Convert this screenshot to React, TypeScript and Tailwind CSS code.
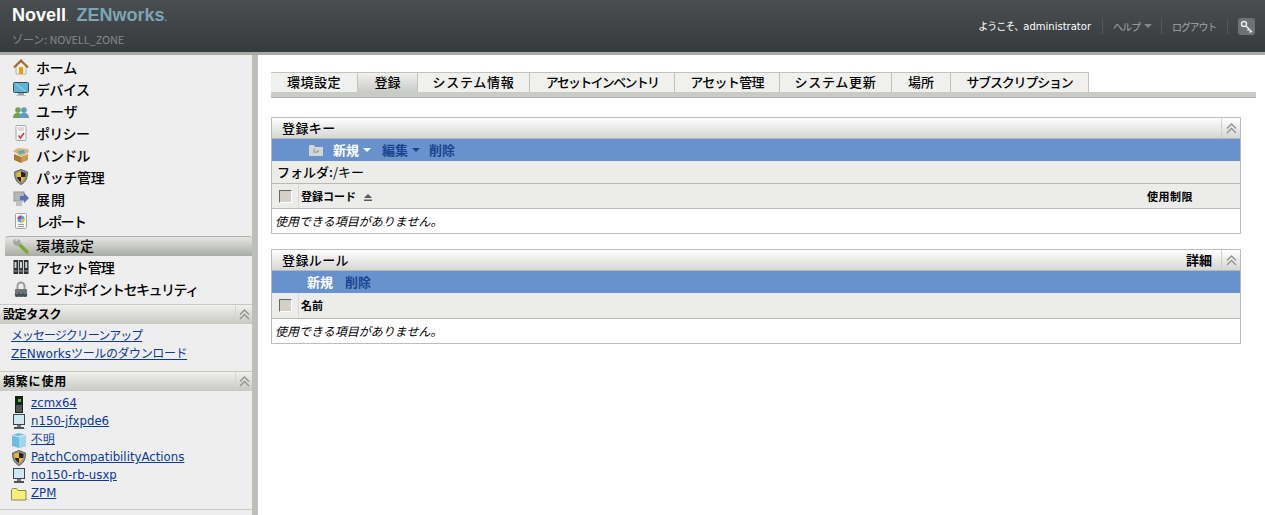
import type { ReactNode } from "react"

const font = "[font-family:'Noto_Sans_CJK_JP','Liberation_Sans',sans-serif]"
const latin = "font-['DejaVu_Sans',sans-serif]"

const HomeIcon = () => (
  <svg width="16" height="16" viewBox="0 0 16 16">
    <path d="M3 8v7h10V8L8 3z" fill="#f3f1e8" stroke="#b9b4a4" />
    <path d="M1 8.500 8 1.500l7 7" fill="none" stroke="#a5672c" strokeWidth="2" />
    <rect x="6" y="8" width="4" height="7" fill="#f09a10" />
  </svg>
)
const DeviceIcon = () => (
  <svg width="16" height="16" viewBox="0 0 16 16">
    <rect x="0.500" y="1.500" width="15" height="10" rx="1" fill="#5fb4d3" stroke="#3d4b50" />
    <path d="M3 3l9 7" stroke="#a5dcec" />
    <rect x="5" y="12" width="6" height="2" fill="#9aa1a3" />
    <rect x="3" y="14" width="10" height="1" fill="#c0c4c4" />
  </svg>
)
const UsersIcon = () => (
  <svg width="16" height="16" viewBox="0 0 16 16">
    <circle cx="5" cy="7" r="2.800" fill="#6ba54a" />
    <path d="M0 15c0-7 9-7 9 0z" fill="#6ba54a" />
    <circle cx="11" cy="7" r="2.800" fill="#5b9cc0" />
    <path d="M6 15c0-7 10-7 10 0z" fill="#5b9cc0" />
  </svg>
)
const PolicyIcon = () => (
  <svg width="16" height="16" viewBox="0 0 16 16">
    <rect x="3" y="0.500" width="10" height="15" rx="1" fill="#f7f7f5" stroke="#a9a9a4" />
    <path d="M5 3h6M5 5h6" stroke="#c0c0bc" />
    <path d="M5.500 10.500l2 2.500 3.500-5" fill="none" stroke="#d8313a" strokeWidth="1.500" />
  </svg>
)
const BundleIcon = () => (
  <svg width="16" height="16" viewBox="0 0 16 16">
    <path d="M1 7l7 3v6l-7-3z" fill="#a97a34" />
    <path d="M8 10l7-3v6l-7 3z" fill="#c79a50" />
    <path d="M0 4l5-3 10 1 1 3-8 5z" fill="#d9b679" />
    <path d="M5 4l6-1 1 3-6 1z" fill="#5aa7c4" />
  </svg>
)
const ShieldIcon = () => (
  <svg width="16" height="16" viewBox="0 0 16 16">
    <path d="M8 0.500 14.500 3c0 6-1.500 10-6.500 12.500C3 13 1.500 9 1.500 3z" fill="#8f9496" stroke="#5f6365" />
    <path d="M8 2.500 12.500 4c0 2-.1 3-.4 4H8z" fill="#20201c" />
    <path d="M8 2.500 3.500 4c0 2 .1 3 .4 4H8z" fill="#f2b70c" />
    <path d="M8 8h4.100c-.7 2.200-2 3.800-4.100 5z" fill="#f2b70c" />
    <path d="M8 8H3.900c.7 2.200 2 3.800 4.100 5z" fill="#20201c" />
  </svg>
)
const DeployIcon = () => (
  <svg width="16" height="16" viewBox="0 0 16 16">
    <rect x="1" y="1" width="10" height="9" fill="#b4b8bb" stroke="#92979a" />
    <rect x="3" y="11" width="6" height="4" fill="#bfc2c4" />
    <path d="M7 5h4V2l5 5-5 5V9H7z" fill="#5b71b8" />
  </svg>
)
const ReportIcon = () => (
  <svg width="16" height="16" viewBox="0 0 16 16">
    <rect x="2.500" y="0.500" width="11" height="15" rx="1" fill="#f7f7f5" stroke="#a4a4a0" />
    <circle cx="8" cy="6" r="3.500" fill="#35b3d8" />
    <path d="M8 6V2.500A3.500 3.500 0 0 0 4.500 6z" fill="#e8268b" />
    <path d="M8 6h3.500A3.500 3.500 0 0 1 8 9.500z" fill="#f0c020" />
    <path d="M5 11.500h6M5 13.500h6" stroke="#9c9c98" />
  </svg>
)
const WrenchIcon = () => (
  <svg width="17" height="17" viewBox="0 0 17 17">
    <path d="M8 8l7 7" stroke="#7eaa2e" strokeWidth="3.500" strokeLinecap="round" />
    <path d="M3 1.500A4 4 0 0 0 2 7a4 4 0 0 0 6 1l.5-2.500A4 4 0 0 0 6 2L5 4.500 3.500 4z" fill="#a4a6a2" />
  </svg>
)
const AssetIcon = () => (
  <svg width="16" height="16" viewBox="0 0 16 16">
    <rect x="0.500" y="1" width="4.500" height="14" fill="#2b2f30" />
    <rect x="5.700" y="1" width="4.500" height="14" fill="#3a3f40" />
    <rect x="11" y="1" width="4.500" height="14" fill="#2b2f30" />
    <path d="M2.500 3v6M8 3v6M13.200 3v6" stroke="#c9d2d6" strokeWidth="2" />
    <path d="M1 12h3.500M6 12h3.500M11.500 12h3.500" stroke="#9aa2a6" />
  </svg>
)
const LockIcon = () => (
  <svg width="16" height="17" viewBox="0 0 16 17">
    <path d="M4.500 8V5a3.500 3.500 0 0 1 7 0v3" fill="none" stroke="#9a9d9f" strokeWidth="2" />
    <rect x="2" y="8" width="12" height="8" rx="1" fill="#6d7376" />
    <path d="M2 13l2 2 2-2 2 2 2-2 2 2 2-2" fill="none" stroke="#2c4d5c" strokeWidth="1.500" />
  </svg>
)
const ServerIcon = () => (
  <svg width="16" height="17" viewBox="0 0 16 17">
    <rect x="4" y="0" width="8" height="17" fill="#1d1f1d" />
    <rect x="7" y="3" width="3" height="3" fill="#2fd12f" />
    <path d="M6 9v7M8 9v7M10 9v7" stroke="#8a8f8a" />
  </svg>
)
const PcIcon = () => (
  <svg width="16" height="16" viewBox="0 0 16 16">
    <rect x="2.500" y="0.500" width="11" height="10" fill="#cfe6f5" stroke="#3d4448" />
    <rect x="6" y="11" width="4" height="2" fill="#737a7e" />
    <rect x="3" y="13" width="10" height="2" fill="#4d5357" />
  </svg>
)
const UnknownIcon = () => (
  <svg width="16" height="16" viewBox="0 0 16 16">
    <path d="M1 3l7-2 7 2v11l-7 2-7-2z" fill="#6cbde0" />
    <path d="M8 3v13l7-2V3z" fill="#9fd6ee" />
    <path d="M1 3l7 2 7-2" fill="none" stroke="#cfe9f5" />
  </svg>
)
const FolderIcon = () => (
  <svg width="16" height="14" viewBox="0 0 16 14">
    <path d="M.500 13V2.500l1-1h4l1.500 2h8v9.500z" fill="#f5ee7a" stroke="#8f8c4a" />
  </svg>
)
const FolderUpIcon = () => (
  <svg width="16" height="13" viewBox="0 0 16 13">
    <path d="M1 12V2l1-1h4l1 2h8v9z" fill="#d5d6d2" />
    <path d="M5 8h5V6M5 6.500 7 5" fill="none" stroke="#8a8c88" />
  </svg>
)
const Chevrons = () => (
  <svg width="11" height="11" viewBox="0 0 11 11" fill="none" stroke="#8e918c" strokeWidth="1.300">
    <path d="M1 5.500 5.500 1 10 5.500M1 10 5.500 5.500 10 10" />
  </svg>
)
const Caret = ({ color }: { color: string }) => (
  <svg width="8" height="4" viewBox="0 0 8 4" className="ml-1">
    <path d="M0 0h8L4 4z" fill={color} />
  </svg>
)

const nav: { label: string; icon: ReactNode; track: string; active?: boolean }[] = [
  { label: "ホーム", icon: <HomeIcon />, track: "tracking-[-0.2px]" },
  { label: "デバイス", icon: <DeviceIcon />, track: "tracking-[-0.500px]" },
  { label: "ユーザ", icon: <UsersIcon />, track: "tracking-[0px]" },
  { label: "ポリシー", icon: <PolicyIcon />, track: "tracking-[-0.700px]" },
  { label: "バンドル", icon: <BundleIcon />, track: "tracking-[-0.700px]" },
  { label: "パッチ管理", icon: <ShieldIcon />, track: "tracking-[-0.300px]" },
  { label: "展開", icon: <DeployIcon />, track: "tracking-[1px]" },
  { label: "レポート", icon: <ReportIcon />, track: "tracking-[-1.700px]" },
  { label: "環境設定", icon: <WrenchIcon />, track: "tracking-[0.700px]", active: true },
  { label: "アセット管理", icon: <AssetIcon />, track: "tracking-[-1px]" },
  { label: "エンドポイントセキュリティ", icon: <LockIcon />, track: "tracking-[-1.500px]" },
]

const recent: { label: string; icon: ReactNode }[] = [
  { label: "zcmx64", icon: <ServerIcon /> },
  { label: "n150-jfxpde6", icon: <PcIcon /> },
  { label: "不明", icon: <UnknownIcon /> },
  { label: "PatchCompatibilityActions", icon: <ShieldIcon /> },
  { label: "no150-rb-usxp", icon: <PcIcon /> },
  { label: "ZPM", icon: <FolderIcon /> },
]

const tabs = [
  { label: "環境設定", width: "w-[87px]", track: "tracking-[0.500px]" },
  { label: "登録", width: "w-[60px]", track: "tracking-[0px]", active: true },
  { label: "システム情報", width: "w-[112px]", track: "tracking-[0.700px]" },
  { label: "アセットインベントリ", width: "w-[145px]", track: "tracking-[-1.700px]" },
  { label: "アセット管理", width: "w-[105px]", track: "tracking-[-0.700px]" },
  { label: "システム更新", width: "w-[112px]", track: "tracking-[0.700px]" },
  { label: "場所", width: "w-[59px]", track: "tracking-[0px]" },
  { label: "サブスクリプション", width: "w-[138px]", track: "tracking-[-1.200px]" },
]

function SideHeader({ title, track }: { title: string; track: string }) {
  return (
    <div className="flex h-[20px] border-y border-[#c8c9c4] bg-gradient-to-b from-[#f0f0ee] to-[#c9cbc6]">
      <div className={`flex-1 pl-[3px] text-[12px] font-bold leading-[18px] text-black ${track}`}>{title}</div>
      <div className="flex w-[17px] items-center justify-center border-l border-[#d4d5d1]">
        <Chevrons />
      </div>
    </div>
  )
}

function PanelTitle({ title, right }: { title: string; right?: string }) {
  return (
    <div className="flex h-[21px] border-b border-[#b9bab6] bg-gradient-to-b from-[#ffffff] to-[#d5d7d3]">
      <div className="flex-1 pl-[10px] text-[13px] font-medium leading-[20px] tracking-[0.400px] text-black">{title}</div>
      {right && <div className="pr-[9px] text-[13px] font-bold leading-[20px] text-black">{right}</div>}
      <div className="flex w-[19px] items-center justify-center border-l border-[#cfd0cc]">
        <Chevrons />
      </div>
    </div>
  )
}

function CheckHeader({ label, height, children }: { label: string; height: string; children?: ReactNode }) {
  return (
    <div className={`flex items-center border-b border-[#b9bab6] bg-[#ecedeb] ${height}`}>
      <div className="flex h-full w-[27px] items-center justify-center border-r border-[#d8d8d4]">
        <div className="h-[13px] w-[13px] border border-white border-t-[#666] border-l-[#666] bg-[#d4d0c8]" />
      </div>
      <span className="pl-[2px] text-[11px] font-bold text-black">{label}</span>
      {children}
    </div>
  )
}

const Empty = () => (
  <div className="h-[24px] pl-[3px] text-[12px] italic leading-[24px] text-black">使用できる項目がありません。</div>
)

export default function App() {
  return (
    <div className={`flex h-[515px] w-[1265px] flex-col overflow-hidden bg-white ${font}`}>
      {/* ヘッダー */}
      <header className="flex h-[55px] shrink-0 items-center justify-between border-b-[3px] border-[#a9aaa6] bg-gradient-to-b from-[#4a4e51] to-[#373b3e]">
        <div className="self-start pl-[12px] pt-[4px]">
          <div className="h-[22px] font-['Liberation_Sans',sans-serif] text-[18px] font-bold leading-[22px] text-white">
            Novell<span className="mr-[3px] text-[9px] text-[#9aa]">.</span> <span className="text-[#7ba6b5]">ZENworks</span>
            <span className="text-[9px] text-[#7ba6b5]">.</span>
          </div>
          <div className="mt-[6px] text-[11px] leading-[14px] tracking-[-0.100px] text-[#85888a]">ゾーン: NOVELL_ZONE</div>
        </div>
        <div className="flex items-center pr-[10px] text-[10px] text-[#a3a5a6]">
          <span className="pr-[11px] text-white">
            <span className="tracking-[-1px]">ようこそ、</span>
            <span className={latin}>administrator</span>
          </span>
          <span className="flex h-[15px] items-center border-l border-[#55595b] pl-[10px] pr-[9px] tracking-[-1px]">
            ヘルプ
            <Caret color="#85888a" />
          </span>
          <span className="flex h-[15px] items-center border-l border-[#55595b] pl-[10px] pr-[11px] tracking-[-1.200px]">ログアウト</span>
          <span className="flex h-[15px] items-center border-l border-[#55595b] pl-[10px]">
            <span className="flex h-[17px] w-[17px] items-center justify-center rounded-[3px] bg-[#6e7274]">
              <svg width="13" height="13" viewBox="0 0 13 13" fill="none" stroke="#e8e8e8" strokeWidth="1.500">
                <circle cx="4" cy="4" r="2.500" />
                <path d="M6 6l6 6M9 9l-1.500 1.500M11 11l-1.500 1.500" />
              </svg>
            </span>
          </span>
        </div>
      </header>

      <div className="flex flex-1 overflow-hidden">
        {/* サイドバー */}
        <aside className="flex w-[258px] shrink-0 flex-col border-r-[6px] border-[#bdbfb9] bg-[#eeeeee]">
          <nav className="pt-[1px]">
            {nav.map((item) => (
              <div
                key={item.label}
                className={
                  item.active
                    ? "ml-[5px] mt-[4px] flex h-[20px] items-center rounded-t-[3px] border-t border-[#b0b1ad] bg-gradient-to-b from-[#e6e7e4] to-[#a9aba6] pb-[3px]"
                    : "flex h-[22px] items-center pl-[5px]"
                }
              >
                <span className="flex w-[31px] justify-center">{item.icon}</span>
                <span className={`text-[14px] font-medium leading-none text-black ${item.track}`}>{item.label}</span>
              </div>
            ))}
          </nav>

          <div className="mt-[4px]">
            <SideHeader title="設定タスク" track="tracking-[-0.400px]" />
            <div className="h-[47px] pl-[11px] pt-[2px] text-[12px] leading-[18px] text-[#0a3a9c] underline">
              <div className="tracking-[-1px]">メッセージクリーンアップ</div>
              <div className="h-[18px]">
                <span className={`text-[12px] ${latin}`}>ZENworks</span>
                <span className="tracking-[-0.400px]">ツールのダウンロード</span>
              </div>
            </div>
            <SideHeader title="頻繁に使用" track="tracking-[0.800px]" />
            <div className="pt-[4px]">
              {recent.map((item) => (
                <div key={item.label} className="flex h-[18px] items-center pl-[11px]">
                  <span className="flex w-[20px] shrink-0 justify-start">{item.icon}</span>
                  <span className={`text-[11.750px] leading-none text-[#0a3a9c] underline ${latin}`}>{item.label}</span>
                </div>
              ))}
            </div>
            <div className="mt-[6px] border-t border-[#c8c9c4]" />
          </div>
        </aside>

        {/* メイン */}
        <main className="flex-1 pl-[13px] pr-[9px] pt-[17px]">
          <div className="flex h-[20px]">
            {tabs.map((tab) => (
              <div
                key={tab.label}
                className={`${tab.width} ${tab.track} border-r border-t border-[#c2c3bf] text-center text-[13px] font-medium leading-[18px] text-black ${
                  tab.active ? "bg-gradient-to-b from-[#f2f2f0] to-[#c9cbc6]" : "bg-[#f0f0ee]"
                }`}
              >
                {tab.label}
              </div>
            ))}
          </div>
          <div className="h-[6px] border-b border-[#b0b1ad] bg-[#c9cbc6]" />

          <section className="mr-[15px] mt-[19px] border border-[#bcbdb9]">
            <PanelTitle title="登録キー" />
            <div className="flex h-[22px] items-center bg-[#6892cd] pl-[36px] text-[13px] font-bold text-[#1b448f]">
              <FolderUpIcon />
              <span className="flex items-center pl-[9px] text-white">
                新規
                <Caret color="#fff" />
              </span>
              <span className="flex items-center pl-[11px]">
                編集
                <Caret color="#1b448f" />
              </span>
              <span className="pl-[9px]">削除</span>
            </div>
            <div className="h-[23px] border-b border-[#b9bab6] bg-[#ecedeb] pl-[5px] text-[13px] leading-[22px] text-black">
              <span className="font-medium">フォルダ:</span>/キー
            </div>
            <CheckHeader label="登録コード" height="h-[25px]">
              <svg width="8" height="8" viewBox="0 0 8 8" className="ml-[8px] mt-[3px]">
                <path d="M0 4l4-4 4 4zM0 5.500h8V7H0z" fill="#55585a" />
              </svg>
              <span className="ml-auto pr-[47px] text-[11px] font-bold tracking-[0.500px] text-black">使用制限</span>
            </CheckHeader>
            <Empty />
          </section>

          <section className="mr-[15px] mt-[15px] border border-[#bcbdb9]">
            <PanelTitle title="登録ルール" right="詳細" />
            <div className="flex h-[22px] items-center bg-[#6892cd] pl-[35px] text-[13px] font-bold text-[#1b448f]">
              <span className="text-white">新規</span>
              <span className="pl-[12px]">削除</span>
            </div>
            <CheckHeader label="名前" height="h-[26px]" />
            <Empty />
          </section>
        </main>
      </div>
    </div>
  )
}
